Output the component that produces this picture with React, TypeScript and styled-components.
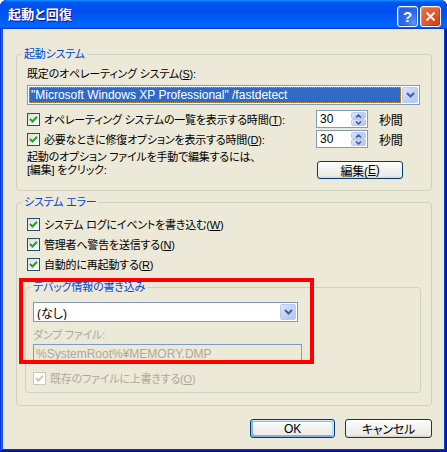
import React from 'react';
import styled, { createGlobalStyle, css } from 'styled-components';

const Global = createGlobalStyle`
  html, body { margin: 0; padding: 0; background: #ffffff; }
  body { width: 447px; height: 452px; overflow: hidden; }
`;

const UI_FONT = `"Liberation Sans", "Noto Sans CJK JP", sans-serif`;

const Window = styled.div`
  position: relative;
  width: 447px;
  height: 452px;
  box-sizing: border-box;
  display: flex;
  flex-direction: column;
  background: #0a5ef0;
  border-radius: 7px 7px 0 0;
  overflow: hidden;
  box-shadow: inset -1px -1px #00138c, inset 1px 1px #0831d9, inset -2px -2px #001ea0,
    inset 2px 2px #166aee, inset -3px -3px #003bda, inset 3px 3px #0855dd;
  font-family: ${UI_FONT};
  font-size: 11px;
  letter-spacing: -0.2px;
  font-feature-settings: "palt";
  color: #000;
`;

const TitleBar = styled.div`
  height: 29px;
  flex: none;
  box-sizing: border-box;
  display: flex;
  align-items: flex-start;
  justify-content: space-between;
  padding: 5px 6px 0 8px;
  border-radius: 7px 7px 0 0;
  background: linear-gradient(
    180deg,
    #0997ff 0%,
    #0053ee 8%,
    #0050ee 40%,
    #0066ff 88%,
    #0066ff 93%,
    #005bff 95%,
    #003dd7 96%,
    #003dd7 100%
  );
`;

const Title = styled.div`
  line-height: 20px;
  font-size: 13px;
  font-weight: bold;
  color: #ffffff;
  text-shadow: 1px 1px #0f1089;
  letter-spacing: 0.3px;
`;

const TitleButtons = styled.div`
  display: flex;
  gap: 2px;
  padding-top: 1px;
`;

const CaptionButton = styled.div<{ $close?: boolean }>`
  width: 21px;
  height: 21px;
  box-sizing: border-box;
  border: 1px solid #ffffff;
  border-radius: 3px;
  display: flex;
  align-items: center;
  justify-content: center;
  color: #fff;
  font-family: "Liberation Sans", sans-serif;
  font-weight: bold;
  font-size: 15px;
  letter-spacing: 0;
  line-height: 1;
  background: ${(p) =>
    p.$close
      ? 'radial-gradient(circle at 80% 85%, #cc4621 0%, #e0552f 40%, #e8714f 100%)'
      : 'radial-gradient(circle at 85% 85%, #5f96f8 0%, #2c6cf0 45%, #2159e4 100%)'};
  box-shadow: inset -1px -1px rgba(0, 0, 0, 0.18), inset 1px 1px rgba(255, 255, 255, 0.25);
`;

const Client = styled.div`
  flex: 1;
  margin: 0 3px 3px 3px;
  background: #ece9d8;
  display: flex;
  flex-direction: column;
  padding: 25px 12px 0 13px;
`;

const Group = styled.div<{ $padBottom: number }>`
  position: relative;
  border: 1px solid #d0d0bf;
  border-radius: 4px;
  padding: 0 0 ${(p) => p.$padBottom}px 0;
  display: flex;
  flex-direction: column;
`;

const OuterGroup = styled(Group)<{ $top?: number }>`
  margin-top: ${(p) => p.$top ?? 0}px;
`;

const InnerGroup = styled(Group)`
  margin: 14px 10px 0 8px;
  padding-left: 7px;
`;

const GroupLabel = styled.div`
  position: absolute;
  top: -8px;
  left: 5px;
  padding: 0 2px;
  line-height: 14px;
  color: #0046d5;
  background: #ece9d8;
  white-space: nowrap;
`;

const Body = styled.div`
  display: flex;
  flex-direction: column;
  padding: 0 11px 0 10px;
`;

const Label = styled.div<{ $top: number; $disabled?: boolean }>`
  margin-top: ${(p) => p.$top}px;
  line-height: 14px;
  white-space: nowrap;
  color: ${(p) => (p.$disabled ? '#aca899' : '#000')};
`;

const U = styled.span`
  text-decoration: underline;
  text-underline-offset: 1px;
`;

const Combo = styled.div<{ $w: number; $top: number }>`
  margin-top: ${(p) => p.$top}px;
  width: ${(p) => p.$w}px;
  height: 20px;
  box-sizing: border-box;
  border: 1px solid #7f9db9;
  background: #ffffff;
  display: flex;
  padding: 1px;
  gap: 1px;
`;

const ComboText = styled.div<{ $selected?: boolean }>`
  flex: 1;
  display: flex;
  align-items: center;
  padding-left: 2px;
  white-space: nowrap;
  overflow: hidden;
  box-sizing: border-box;
  font-size: 12px;
  letter-spacing: 0;
  ${(p) =>
    p.$selected &&
    css`
      background: #316ac5;
      color: #ffffff;
      outline: 1px dotted #ce953a;
      outline-offset: -1px;
    `}
`;

const DropButton = styled.div`
  width: 16px;
  box-sizing: border-box;
  border: 1px solid #bacbf5;
  border-radius: 2px;
  background: linear-gradient(135deg, #dae5fd 0%, #c1d3fb 50%, #aec4f7 100%);
  display: flex;
  align-items: center;
  justify-content: center;
`;

const CheckRow = styled.div<{ $top: number }>`
  margin-top: ${(p) => p.$top}px;
  height: 18px;
  display: grid;
  grid-template-columns: 289px 52px auto;
  align-items: center;
`;

const CheckLine = styled.div<{ $top: number }>`
  margin-top: ${(p) => p.$top}px;
  height: 18px;
  display: flex;
  align-items: center;
`;

const CheckItem = styled.div<{ $disabled?: boolean }>`
  display: flex;
  align-items: center;
  gap: 4px;
  white-space: nowrap;
  color: ${(p) => (p.$disabled ? '#aca899' : '#000')};
`;

const Box = styled.span<{ $disabled?: boolean }>`
  width: 13px;
  height: 13px;
  box-sizing: border-box;
  flex: none;
  display: flex;
  align-items: center;
  justify-content: center;
  border: 1px solid ${(p) => (p.$disabled ? '#cac8bb' : '#1c5180')};
  background: ${(p) =>
    p.$disabled ? '#ffffff' : 'linear-gradient(135deg, #dcdcd7 0%, #ffffff 100%)'};
`;

const Spin = styled.div`
  width: 52px;
  height: 18px;
  box-sizing: border-box;
  border: 1px solid #7f9db9;
  background: #ffffff;
  display: flex;
  padding: 1px;
`;

const SpinValue = styled.div`
  flex: 1;
  display: flex;
  align-items: center;
  padding-left: 2px;
  font-size: 12px;
  letter-spacing: 0;
`;

const SpinButtons = styled.div`
  width: 15px;
  display: flex;
  flex-direction: column;
`;

const SpinHalf = styled.div`
  flex: 1;
  box-sizing: border-box;
  border: 1px solid #bacbf5;
  border-radius: 2px;
  background: linear-gradient(135deg, #dae5fd 0%, #c1d3fb 50%, #b4c8f8 100%);
  display: flex;
  align-items: center;
  justify-content: center;
`;

const Unit = styled.span`
  margin-left: 11px;
  font-size: 12px;
`;

const EditSection = styled.div`
  margin-top: 3px;
  display: grid;
  grid-template-columns: 290px 86px;
  align-items: start;
`;

const EditText = styled.div`
  line-height: 13px;
  white-space: nowrap;
`;

const PushButton = styled.div<{ $w: number; $h: number; $default?: boolean; $top?: number }>`
  margin-top: ${(p) => p.$top ?? 0}px;
  width: ${(p) => p.$w}px;
  height: ${(p) => p.$h}px;
  box-sizing: border-box;
  border: 1px solid #003c74;
  border-radius: 3px;
  background: linear-gradient(180deg, #ffffff 0%, #f3f3ef 40%, #ecebe6 86%, #d6d0c5 100%);
  display: flex;
  align-items: center;
  justify-content: center;
  white-space: nowrap;
  font-size: 12px;
  ${(p) =>
    p.$default &&
    css`
      box-shadow: inset -1px 1px #cee7ff, inset 1px 2px #98b8ea, inset -2px 2px #bcd4f6,
        inset 1px -1px #89ade4, inset 2px -2px #89ade4;
    `}
`;

const TextField = styled.div<{ $w: number }>`
  margin-top: 2px;
  width: ${(p) => p.$w}px;
  height: 20px;
  box-sizing: border-box;
  border: 1px solid #7f9db9;
  background: #ece9d8;
  color: #aca899;
  display: flex;
  align-items: center;
  padding-left: 2px;
  white-space: nowrap;
  font-size: 12px;
  letter-spacing: 0;
`;

const InnerBody = styled.div`
  display: flex;
  flex-direction: column;
`;

const Footer = styled.div`
  margin-top: 13px;
  display: flex;
  justify-content: flex-end;
  gap: 10px;
`;

const Annotation = styled.div`
  position: absolute;
  left: 19px;
  top: 278px;
  width: 295px;
  height: 86px;
  box-sizing: border-box;
  border: 4px solid #ff0000;
  pointer-events: none;
`;

const Chevron = ({ up }: { up?: boolean }) => (
  <svg width="9" height="6" viewBox="0 0 9 6">
    <polyline
      points={up ? '1,5 4.5,1.5 8,5' : '1,1 4.5,4.5 8,1'}
      fill="none"
      stroke="#4d6185"
      strokeWidth="2"
    />
  </svg>
);

const SmallChevron = ({ up }: { up?: boolean }) => (
  <svg width="7" height="4" viewBox="0 0 7 4">
    <polyline
      points={up ? '1,3.5 3.5,1 6,3.5' : '1,0.5 3.5,3 6,0.5'}
      fill="none"
      stroke="#4d6185"
      strokeWidth="1.6"
    />
  </svg>
);

const Check = ({ disabled }: { disabled?: boolean }) => (
  <svg width="9" height="9" viewBox="0 0 9 9">
    <polyline
      points="1,4 3.5,6.5 8,1.8"
      fill="none"
      stroke={disabled ? '#cac8bb' : '#21a121'}
      strokeWidth="2"
    />
  </svg>
);

const CheckBox = ({
  label,
  disabled,
}: {
  label: React.ReactNode;
  disabled?: boolean;
}) => (
  <CheckItem $disabled={disabled}>
    <Box $disabled={disabled}>
      <Check disabled={disabled} />
    </Box>
    <span>{label}</span>
  </CheckItem>
);

const SpinBox = ({ value }: { value: string }) => (
  <Spin>
    <SpinValue>{value}</SpinValue>
    <SpinButtons>
      <SpinHalf>
        <SmallChevron up />
      </SpinHalf>
      <SpinHalf>
        <SmallChevron />
      </SpinHalf>
    </SpinButtons>
  </Spin>
);

export default function App() {
  return (
    <>
      <Global />
      <Window>
        <TitleBar>
          <Title>起動と回復</Title>
          <TitleButtons>
            <CaptionButton>?</CaptionButton>
            <CaptionButton $close>
              <svg width="11" height="11" viewBox="0 0 11 11">
                <path d="M1.5 1.5 L9.5 9.5 M9.5 1.5 L1.5 9.5" stroke="#fff" strokeWidth="2" />
              </svg>
            </CaptionButton>
          </TitleButtons>
        </TitleBar>
        <Client>
          <OuterGroup $padBottom={11}>
            <GroupLabel>起動システム</GroupLabel>
            <Body>
              <Label $top={12}>
                既定のオペレーティング システム(<U>S</U>):
              </Label>
              <Combo $w={393} $top={4}>
                <ComboText $selected>"Microsoft Windows XP Professional" /fastdetect</ComboText>
                <DropButton>
                  <Chevron />
                </DropButton>
              </Combo>
              <CheckRow $top={5}>
                <CheckBox
                  label={
                    <>
                      オペレーティング システムの一覧を表示する時間(<U>T</U>):
                    </>
                  }
                />
                <SpinBox value="30" />
                <Unit>秒間</Unit>
              </CheckRow>
              <CheckRow $top={2}>
                <CheckBox
                  label={
                    <>
                      必要なときに修復オプションを表示する時間(<U>D</U>):
                    </>
                  }
                />
                <SpinBox value="30" />
                <Unit>秒間</Unit>
              </CheckRow>
              <EditSection>
                <EditText>
                  起動のオプション ファイルを手動で編集するには、
                  <br />
                  [編集] をクリック:
                </EditText>
                <PushButton $w={86} $h={18} $top={10}>
                  編集(<U>E</U>)
                </PushButton>
              </EditSection>
            </Body>
          </OuterGroup>

          <OuterGroup $padBottom={12} $top={11}>
            <GroupLabel>システム エラー</GroupLabel>
            <Body>
              <CheckLine $top={12}>
                <CheckBox
                  label={
                    <>
                      システム ログにイベントを書き込む(<U>W</U>)
                    </>
                  }
                />
              </CheckLine>
              <CheckLine $top={2}>
                <CheckBox
                  label={
                    <>
                      管理者へ警告を送信する(<U>N</U>)
                    </>
                  }
                />
              </CheckLine>
              <CheckLine $top={2}>
                <CheckBox
                  label={
                    <>
                      自動的に再起動する(<U>R</U>)
                    </>
                  }
                />
              </CheckLine>
            </Body>
            <InnerGroup $padBottom={5}>
              <GroupLabel>デバッグ情報の書き込み</GroupLabel>
              <InnerBody>
                <Combo $w={265} $top={14}>
                  <ComboText>(なし)</ComboText>
                  <DropButton>
                    <Chevron />
                  </DropButton>
                </Combo>
                <Label $top={6} $disabled>
                  ダンプ ファイル:
                </Label>
                <TextField $w={269}>%SystemRoot%¥MEMORY.DMP</TextField>
                <CheckLine $top={5}>
                  <CheckBox
                    disabled
                    label={
                      <>
                        既存のファイルに上書きする(<U>O</U>)
                      </>
                    }
                  />
                </CheckLine>
              </InnerBody>
            </InnerGroup>
          </OuterGroup>

          <Footer>
            <PushButton $w={85} $h={19} $default>
              OK
            </PushButton>
            <PushButton $w={87} $h={19}>
              キャンセル
            </PushButton>
          </Footer>
        </Client>
        <Annotation />
      </Window>
    </>
  );
}
